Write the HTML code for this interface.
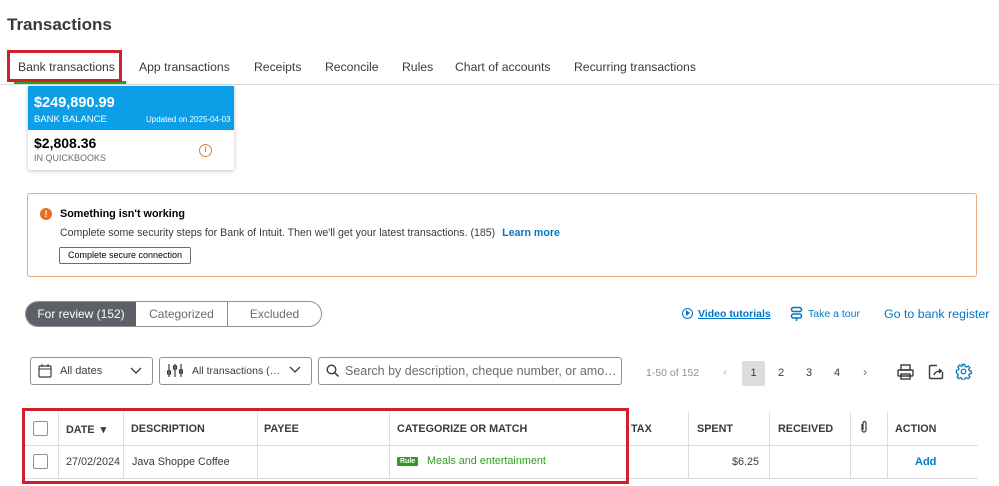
<!DOCTYPE html>
<html><head><meta charset="utf-8"><style>
*{margin:0;padding:0;box-sizing:border-box}
body{width:999px;height:486px;overflow:hidden;background:#fff;font-family:"Liberation Sans",sans-serif;color:#393a3d;position:relative}
.a{position:absolute;white-space:nowrap}
.tab{position:absolute;top:60px;font-size:12.2px;color:#393a3d}
.th{position:absolute;top:423px;font-size:10.8px;font-weight:bold;color:#393a3d}
.vl{position:absolute;width:1px;background:#ddd}
.cb{position:absolute;width:15px;height:15px;border:1px solid #8d9096;border-radius:2px;background:#fff}
</style></head><body>
<div class="a" style="left:7px;top:15px;font-size:17px;font-weight:bold;color:#393a3d">Transactions</div>

<div class="tab" style="left:18px">Bank transactions</div>
<div class="tab" style="left:139px">App transactions</div>
<div class="tab" style="left:254px">Receipts</div>
<div class="tab" style="left:325px">Reconcile</div>
<div class="tab" style="left:402px">Rules</div>
<div class="tab" style="left:455px">Chart of accounts</div>
<div class="tab" style="left:574px">Recurring transactions</div>
<div class="a" style="left:0;top:84px;width:999px;height:1px;background:#dcdcdc"></div>
<div class="a" style="left:14px;top:81px;width:112px;height:3px;background:#2ca01c"></div>
<div class="a" style="left:7px;top:50px;width:115px;height:32px;border:3px solid #d0202a"></div>

<div class="a" style="left:28px;top:86px;width:206px;height:84px;background:#fff;box-shadow:0 1px 4px rgba(0,0,0,.25);border-radius:2px"></div>
<div class="a" style="left:28px;top:86px;width:206px;height:44px;background:#0d9ee8"></div>
<div class="a" style="left:34px;top:95px;font-size:14.5px;font-weight:bold;color:#fff">$249,890.99</div>
<div class="a" style="left:34px;top:114px;font-size:9.5px;color:#fff">BANK BALANCE</div>
<div class="a" style="left:146px;top:115px;font-size:8px;color:#fff">Updated on 2025-04-03</div>
<div class="a" style="left:34px;top:135px;font-size:14px;font-weight:bold;color:#000">$2,808.36</div>
<div class="a" style="left:34px;top:153px;font-size:9px;color:#6b6c72">IN QUICKBOOKS</div>
<div class="a" style="left:199px;top:144px;width:13px;height:13px;border:1.5px solid #e07b39;border-radius:50%;font-size:8px;color:#e07b39;text-align:center;line-height:10px;font-weight:bold">i</div>

<div class="a" style="left:27px;top:193px;width:950px;height:84px;border:1px solid #e8a97e;border-radius:3px"></div>
<div class="a" style="left:40px;top:208px;width:12px;height:12px;background:#e8711e;border-radius:50%;color:#fff;font-size:9px;font-weight:bold;text-align:center;line-height:12px">!</div>
<div class="a" style="left:60px;top:208px;font-size:10.8px;font-weight:bold;color:#000">Something isn't working</div>
<div class="a" style="left:60px;top:227px;font-size:10.6px;color:#393a3d">Complete some security steps for Bank of Intuit. Then we'll get your latest transactions. (185) <span style="color:#0077c5;font-weight:bold;margin-left:4px">Learn more</span></div>
<div class="a" style="left:59px;top:247px;width:132px;height:17px;border:1px solid #6b6c72;border-radius:2px;font-size:9px;text-align:center;line-height:15px;color:#000">Complete secure connection</div>

<div class="a" style="left:25px;top:301px;width:297px;height:26px;border:1px solid #8d9096;border-radius:13px;overflow:hidden">
<div class="a" style="left:0;top:0;width:110px;height:24px;background:#5d6067;color:#fff;font-size:12px;line-height:24px;text-align:center">For review (152)</div>
<div class="a" style="left:110px;top:0;width:92px;height:24px;border-right:1px solid #8d9096;font-size:12px;line-height:24px;text-align:center;color:#6b6c72">Categorized</div>
<div class="a" style="left:202px;top:0;width:93px;height:24px;font-size:12px;line-height:24px;text-align:center;color:#6b6c72">Excluded</div>
</div>

<div class="a" style="left:682px;top:308px;width:11px;height:11px;border:1.3px solid #0077c5;border-radius:50%"></div>
<div class="a" style="left:686px;top:310px;width:0;height:0;border-left:4px solid #0077c5;border-top:3px solid transparent;border-bottom:3px solid transparent"></div>
<div class="a" style="left:698px;top:308px;font-size:10.5px;color:#0077c5;font-weight:bold;text-decoration:underline">Video tutorials</div>
<svg class="a" style="left:790px;top:306px" width="13" height="15" viewBox="0 0 13 15"><rect x="1.5" y="1.5" width="10" height="4" rx="2" fill="none" stroke="#0077c5" stroke-width="1.5"/><rect x="1.5" y="8" width="10" height="4" rx="2" fill="none" stroke="#0077c5" stroke-width="1.5"/><line x1="6.5" y1="12" x2="6.5" y2="15" stroke="#0077c5" stroke-width="1.5"/></svg>
<div class="a" style="left:808px;top:308px;font-size:10.5px;color:#0077c5">Take a tour</div>
<div class="a" style="left:884px;top:307px;font-size:12.4px;color:#0077c5">Go to bank register</div>

<div class="a" style="left:30px;top:357px;width:123px;height:28px;border:1px solid #8d9096;border-radius:3px"></div>
<svg class="a" style="left:38px;top:364px" width="14" height="14"><rect x="1" y="2" width="12" height="11" rx="1" fill="none" stroke="#393a3d" stroke-width="1.2"/><line x1="1" y1="5" x2="13" y2="5" stroke="#393a3d"/><line x1="4" y1="0" x2="4" y2="3" stroke="#393a3d"/><line x1="10" y1="0" x2="10" y2="3" stroke="#393a3d"/></svg>
<div class="a" style="left:60px;top:365px;font-size:11px">All dates</div>
<svg class="a" style="left:130px;top:367px" width="12" height="8"><path d="M1 1l5 5 5-5" fill="none" stroke="#393a3d" stroke-width="1.3"/></svg>
<div class="a" style="left:159px;top:357px;width:153px;height:28px;border:1px solid #8d9096;border-radius:3px"></div>
<svg class="a" style="left:167px;top:363px" width="16" height="15"><g stroke="#393a3d" stroke-width="1.2" fill="none"><line x1="2" y1="1" x2="2" y2="14"/><line x1="8" y1="1" x2="8" y2="14"/><line x1="14" y1="1" x2="14" y2="14"/><rect x="0.5" y="8" width="3" height="3"/><rect x="6.5" y="3" width="3" height="3"/><rect x="12.5" y="7" width="3" height="3"/></g></svg>
<div class="a" style="left:192px;top:365px;font-size:10.5px">All transactions (…</div>
<svg class="a" style="left:289px;top:366px" width="12" height="8"><path d="M1 1l5 5 5-5" fill="none" stroke="#393a3d" stroke-width="1.3"/></svg>
<div class="a" style="left:318px;top:357px;width:304px;height:28px;border:1px solid #8d9096;border-radius:3px"></div>
<svg class="a" style="left:326px;top:364px" width="14" height="14"><circle cx="5.5" cy="5.5" r="4.3" fill="none" stroke="#393a3d" stroke-width="1.4"/><line x1="8.7" y1="8.7" x2="12.5" y2="12.5" stroke="#393a3d" stroke-width="1.5"/></svg>
<div class="a" style="left:345px;top:364px;font-size:12.5px;color:#6b6c72">Search by description, cheque number, or amo…</div>

<div class="a" style="left:646px;top:367px;font-size:10.5px;color:#8d9096">1-50 of 152</div>
<div class="a" style="left:723px;top:365px;font-size:12px;color:#c4c4c4">‹</div>
<div class="a" style="left:742px;top:361px;width:23px;height:25px;background:#dcdcdc;border-radius:2px;font-size:11px;text-align:center;line-height:25px;color:#393a3d">1</div>
<div class="a" style="left:778px;top:367px;font-size:11px">2</div>
<div class="a" style="left:806px;top:367px;font-size:11px">3</div>
<div class="a" style="left:834px;top:367px;font-size:11px">4</div>
<div class="a" style="left:863px;top:365px;font-size:12px;color:#6b6c72">›</div>
<svg class="a" style="left:897px;top:364px" width="17" height="16"><g fill="none" stroke="#393a3d" stroke-width="1.4"><rect x="4" y="1" width="9" height="5"/><rect x="1" y="6" width="15" height="6" rx="1"/><rect x="4" y="10" width="9" height="5"/></g></svg>
<svg class="a" style="left:928px;top:364px" width="16" height="16"><g fill="none" stroke="#393a3d" stroke-width="1.4"><path d="M9 1.5H2.5a1 1 0 0 0-1 1v11a1 1 0 0 0 1 1h11a1 1 0 0 0 1-1V8"/><path d="M6 11c1-3 3-4 7-4M11 5l2.5 2-2.5 2"/></g><rect x="12" y="1" width="3" height="3" fill="#fff"/></svg>
<svg class="a" style="left:955px;top:363px" width="17" height="17" viewBox="0 0 24 24"><g fill="none" stroke="#0077c5" stroke-width="1.8"><circle cx="12" cy="12" r="3.2"/><path d="M10.3 2h3.4l.5 2.8 2 1 2.4-1.6 2.4 2.4-1.6 2.4.9 2 2.7.5v3.4l-2.7.5-.9 2 1.6 2.4-2.4 2.4-2.4-1.6-2 .9-.5 2.8h-3.4l-.5-2.8-2-.9-2.4 1.6-2.4-2.4 1.6-2.4-.9-2L2 13.7v-3.4l2.8-.5.9-2-1.6-2.4 2.4-2.4 2.4 1.6 2-1z"/></g></svg>

<div class="a" style="left:25px;top:445px;width:953px;height:1px;background:#dcdcdc"></div>
<div class="a" style="left:25px;top:478px;width:953px;height:1px;background:#dcdcdc"></div>
<div class="vl" style="left:58px;top:412px;height:66px"></div>
<div class="vl" style="left:123px;top:412px;height:66px"></div>
<div class="vl" style="left:257px;top:412px;height:66px"></div>
<div class="vl" style="left:389px;top:412px;height:66px"></div>
<div class="vl" style="left:688px;top:412px;height:66px"></div>
<div class="vl" style="left:769px;top:412px;height:66px"></div>
<div class="vl" style="left:850px;top:412px;height:66px"></div>
<div class="vl" style="left:887px;top:412px;height:66px"></div>
<div class="cb" style="left:33px;top:421px"></div>
<div class="cb" style="left:33px;top:454px"></div>
<div class="th" style="left:66px">DATE &nbsp;▾</div>
<div class="th" style="left:131px">DESCRIPTION</div>
<div class="th" style="left:264px">PAYEE</div>
<div class="th" style="left:397px">CATEGORIZE OR MATCH</div>
<div class="th" style="left:631px">TAX</div>
<div class="th" style="left:697px">SPENT</div>
<div class="th" style="left:778px">RECEIVED</div>
<svg class="a" style="left:860px;top:420px" width="8" height="13"><path d="M2 4v6a2 2 0 0 0 4 0V3a1.5 1.5 0 0 0-3 0v7" fill="none" stroke="#393a3d" stroke-width="1.2"/></svg>
<div class="th" style="left:895px">ACTION</div>
<div class="a" style="left:66px;top:456px;font-size:10.8px">27/02/2024</div>
<div class="a" style="left:132px;top:456px;font-size:10.8px">Java Shoppe Coffee</div>
<div class="a" style="left:397px;top:457px;background:#2ca01c;color:#fff;font-size:7px;font-weight:bold;padding:1px 3px;border-radius:1px">Rule</div>
<div class="a" style="left:427px;top:455px;font-size:10.8px;color:#2ca01c">Meals and entertainment</div>
<div class="a" style="left:732px;top:456px;font-size:10.8px">$6.25</div>
<div class="a" style="left:915px;top:456px;font-size:11px;font-weight:bold;color:#0077c5">Add</div>
<div class="a" style="left:22px;top:408px;width:607px;height:76px;border:3px solid #d0202a"></div>
</body></html>
